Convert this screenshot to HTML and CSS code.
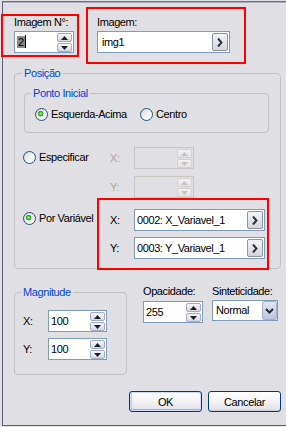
FILE: index.html
```html
<!DOCTYPE html>
<html lang="pt">
<head>
<meta charset="utf-8">
<title>Imagem</title>
<link rel="stylesheet" href="styles.css">
</head>
<body>
<div class="dialog">
  <div class="top-row">
    <div class="hl hl-num">
      <div class="lbl">Imagem N°:</div>
      <div class="spin w-num">
        <span class="val"><span class="sel">2</span><span class="caret"></span></span>
        <span class="spin-btns">
          <span class="sb"><svg width="7" height="4" viewBox="0 0 7 4"><path d="M0 4L3.5 0L7 4Z"/></svg></span>
          <span class="sb"><svg width="7" height="4" viewBox="0 0 7 4"><path d="M0 0H7L3.5 4Z"/></svg></span>
        </span>
      </div>
    </div>
    <div class="hl hl-img">
      <div class="lbl">Imagem:</div>
      <div class="field w-img">
        <span class="val pad4">img1</span>
        <span class="pick"><svg width="6" height="9" viewBox="0 0 6 9"><path d="M1 0.5L4.5 4.5L1 8.5" fill="none" stroke="#333" stroke-width="2"/></svg></span>
      </div>
    </div>
  </div>

  <fieldset class="group g-pos">
    <legend>Posição</legend>
    <fieldset class="group g-ponto">
      <legend>Ponto Inicial</legend>
      <div class="radios">
        <label class="radio checked r-first"><span class="dot"></span>Esquerda-Acima</label>
        <label class="radio"><span class="dot"></span>Centro</label>
      </div>
    </fieldset>

    <div class="opt-row esp">
      <div class="opt-left"><label class="radio"><span class="dot"></span>Especificar</label></div>
      <div class="opt-right">
        <div class="xy-row">
          <span class="xy-lbl dis-txt">X:</span>
          <div class="spin dis w-esp">
            <span class="val"></span>
            <span class="spin-btns">
              <span class="sb"><svg width="7" height="4" viewBox="0 0 7 4"><path d="M0 4L3.5 0L7 4Z"/></svg></span>
              <span class="sb"><svg width="7" height="4" viewBox="0 0 7 4"><path d="M0 0H7L3.5 4Z"/></svg></span>
            </span>
          </div>
        </div>
        <div class="xy-row">
          <span class="xy-lbl dis-txt">Y:</span>
          <div class="spin dis w-esp">
            <span class="val"></span>
            <span class="spin-btns">
              <span class="sb"><svg width="7" height="4" viewBox="0 0 7 4"><path d="M0 4L3.5 0L7 4Z"/></svg></span>
              <span class="sb"><svg width="7" height="4" viewBox="0 0 7 4"><path d="M0 0H7L3.5 4Z"/></svg></span>
            </span>
          </div>
        </div>
      </div>
    </div>

    <div class="opt-row var">
      <div class="opt-left"><label class="radio checked"><span class="dot"></span>Por Variável</label></div>
      <div class="opt-right hl hl-var">
        <div class="xy-row">
          <span class="xy-lbl">X:</span>
          <div class="field w-var">
            <span class="val">0002: X_Variavel_1</span>
            <span class="pick"><svg width="6" height="9" viewBox="0 0 6 9"><path d="M1 0.5L4.5 4.5L1 8.5" fill="none" stroke="#333" stroke-width="2"/></svg></span>
          </div>
        </div>
        <div class="xy-row">
          <span class="xy-lbl">Y:</span>
          <div class="field w-var">
            <span class="val">0003: Y_Variavel_1</span>
            <span class="pick"><svg width="6" height="9" viewBox="0 0 6 9"><path d="M1 0.5L4.5 4.5L1 8.5" fill="none" stroke="#333" stroke-width="2"/></svg></span>
          </div>
        </div>
      </div>
    </div>
  </fieldset>

  <div class="bottom-row">
    <fieldset class="group g-mag">
      <legend>Magnitude</legend>
      <div class="mag-rows">
        <div class="xy-row">
          <span class="xy-lbl">X:</span>
          <div class="spin w-mag">
            <span class="val">100</span>
            <span class="spin-btns">
              <span class="sb"><svg width="7" height="4" viewBox="0 0 7 4"><path d="M0 4L3.5 0L7 4Z"/></svg></span>
              <span class="sb"><svg width="7" height="4" viewBox="0 0 7 4"><path d="M0 0H7L3.5 4Z"/></svg></span>
            </span>
          </div>
        </div>
        <div class="xy-row">
          <span class="xy-lbl">Y:</span>
          <div class="spin w-mag">
            <span class="val">100</span>
            <span class="spin-btns">
              <span class="sb"><svg width="7" height="4" viewBox="0 0 7 4"><path d="M0 4L3.5 0L7 4Z"/></svg></span>
              <span class="sb"><svg width="7" height="4" viewBox="0 0 7 4"><path d="M0 0H7L3.5 4Z"/></svg></span>
            </span>
          </div>
        </div>
      </div>
    </fieldset>

    <div class="col-op">
      <div class="lbl">Opacidade:</div>
      <div class="spin w-op">
        <span class="val">255</span>
        <span class="spin-btns">
          <span class="sb"><svg width="7" height="4" viewBox="0 0 7 4"><path d="M0 4L3.5 0L7 4Z"/></svg></span>
          <span class="sb"><svg width="7" height="4" viewBox="0 0 7 4"><path d="M0 0H7L3.5 4Z"/></svg></span>
        </span>
      </div>
    </div>

    <div class="col-sint">
      <div class="lbl">Sinteticidade:</div>
      <div class="select">
        <span class="val pad3">Normal</span>
        <span class="dd"><svg width="9" height="6" viewBox="0 0 9 6"><path d="M1 1L4.5 4.5L8 1" fill="none" stroke="#2b2b2b" stroke-width="2"/></svg></span>
      </div>
    </div>
  </div>

  <div class="buttons">
    <button class="btn default" type="button">OK</button>
    <button class="btn" type="button">Cancelar</button>
  </div>
</div>
</body>
</html>
```

FILE: styles.css
```css
* { box-sizing: border-box; }

html, body {
  margin: 0;
  padding: 0;
}

body {
  background: #e0dfe3;
  width: 286px;
  height: 427px;
  overflow: hidden;
  font-family: "Liberation Sans", Arial, sans-serif;
  font-size: 11px;
  letter-spacing: -0.4px;
  color: #000;
}

.dialog {
  margin: 1px 0 0 2px;
  width: 284px;
  height: 425px;
  border-left: 1px solid #5e5e7c;
  border-top: 1px solid #72728e;
  border-bottom: 1px solid #5e5e7c;
  box-shadow: inset 0 1px 0 #a9a9bb;
}

.lbl {
  line-height: 13px;
  white-space: nowrap;
}

/* red highlight frames */
.hl {
  border: 2px solid #ff0000;
}

.top-row {
  display: flex;
  align-items: flex-start;
}

.hl-num {
  margin: 12px 0 0 -2px;
  width: 78px;
  padding: 0 0 2px 11px;
}

.hl-num .spin { margin-top: 2px; }

.hl-img {
  margin: 5px 0 0 7px;
  width: 160px;
  padding: 7px 0 9px 9px;
}

.hl-img .field { margin-top: 2px; }

/* inputs */
.field, .spin, .select {
  display: flex;
  height: 22px;
  border: 1px solid #7f9db9;
  background: #fff;
}

.val {
  flex: 1;
  min-width: 0;
  padding: 1px 0 0 2px;
  line-height: 19px;
  white-space: nowrap;
  overflow: hidden;
}

.pad4 { padding-left: 4px; }
.pad3 { padding-left: 3px; padding-top: 0; }

.sel {
  background: #8a8a8a;
  color: #000;
  padding: 0 1px;
}

.caret {
  display: inline-block;
  width: 1px;
  height: 13px;
  background: #000;
  vertical-align: -2px;
}

.w-num { width: 60px; }
.w-img { width: 133px; }
.w-esp { width: 60px; }
.w-var { width: 131px; }
.w-mag { width: 59px; }
.w-op { width: 60px; }

.spin-btns {
  display: flex;
  flex-direction: column;
  gap: 1px;
  padding: 1px 1px 0 0;
}

.sb {
  display: flex;
  align-items: center;
  justify-content: center;
  width: 15px;
  height: 9px;
  border: 1px solid #a3aac2;
  border-radius: 2px;
  background: linear-gradient(#f5f6fa, #d5d8e5);
}

.sb svg { fill: #1e1e1e; }

.spin.dis {
  border-color: #c9c8c0;
  background: #e0dfe3;
}

.spin.dis .sb {
  border-color: #d3d2cc;
  background: linear-gradient(#f0f0f2, #e4e4e8);
}

.spin.dis .sb svg { fill: #c4c3bc; }

.dis-txt { color: #aca899; }

.pick {
  display: flex;
  align-items: center;
  justify-content: center;
  width: 16px;
  height: 18px;
  margin: 1px 1px 0 0;
  border: 1px solid #9093a8;
  border-radius: 2px;
  background: linear-gradient(#f4f5f9, #d2d4e0);
}

/* group boxes */
fieldset.group {
  margin: 0;
  min-width: 0;
  border: 1px solid #c2c2c6;
  border-radius: 4px;
}

fieldset.group legend {
  color: #0046d5;
  padding: 0 2px;
  line-height: 13px;
  white-space: nowrap;
}

.g-pos {
  margin: 3px 0 0 11px !important;
  width: 267px;
  padding: 7px 11px 0 9px;
}

.g-pos > legend { margin-left: -2px; }

.g-ponto {
  width: 245px;
  padding: 8px 0 11px 10px;
}

.g-ponto > legend { margin-left: -4px; }

.radios { display: flex; }

.radio {
  display: inline-flex;
  align-items: center;
  gap: 3px;
  line-height: 13px;
  white-space: nowrap;
}

.r-first { width: 105px; }

.dot {
  width: 13px;
  height: 13px;
  flex: none;
  border-radius: 50%;
  border: 1px solid #1c5180;
  background: linear-gradient(135deg, #d8d6cf 0%, #f4f4f2 55%, #ffffff 100%);
}

.checked .dot {
  background:
    radial-gradient(circle at 42% 42%, #b9f2b0 0, #4cc244 1.5px, #21a121 2.6px, rgba(33,161,33,0) 3.1px),
    linear-gradient(135deg, #d8d6cf 0%, #f4f4f2 55%, #ffffff 100%);
}

.opt-row {
  display: flex;
  align-items: flex-start;
}

.opt-left {
  width: 73px;
  flex: none;
}

.opt-left .radio { margin-left: -1px; }

.esp { margin-top: 14px; }
.esp .opt-left { padding-top: 4px; }

.esp .opt-right {
  padding-left: 13px;
  display: flex;
  flex-direction: column;
  gap: 7px;
}

.var { margin-bottom: -2px; }
.var .opt-left { padding-top: 14px; }

.hl-var {
  width: 179px;
  padding: 9px 0 9px 11px;
  display: flex;
  flex-direction: column;
  gap: 6px;
}

.xy-row {
  display: flex;
  align-items: center;
  height: 22px;
}

.xy-lbl {
  width: 24px;
  flex: none;
  line-height: 13px;
}

/* bottom area */
.bottom-row {
  display: flex;
  align-items: flex-start;
  margin-top: 17px;
  padding-left: 11px;
}

.g-mag {
  width: 113px;
  padding: 11px 0 14px 8px;
}

.g-mag > legend { margin-left: -2px; }

.mag-rows {
  display: flex;
  flex-direction: column;
  gap: 6px;
}

.g-mag .xy-lbl { width: 25px; }

.col-op {
  margin: -1px 0 0 16px;
}

.col-op .spin { margin-top: 3px; }

.col-sint {
  margin: -1px 0 0 9px;
}

.select {
  width: 66px;
  height: 21px;
  margin-top: 2px;
}

.dd {
  display: flex;
  align-items: center;
  justify-content: center;
  width: 15px;
  height: 19px;
  border: 1px solid #a6b0cc;
  border-radius: 2px;
  background: linear-gradient(#e2e7f4, #bcc5df);
}

/* dialog buttons */
.buttons {
  display: flex;
  justify-content: flex-end;
  gap: 6px;
  margin-top: 16px;
  padding-right: 5px;
}

.btn {
  width: 73px;
  height: 21px;
  padding: 0;
  font: inherit;
  letter-spacing: inherit;
  color: #000;
  border: 1px solid #003c74;
  border-radius: 3px;
  background: linear-gradient(#ffffff, #f4f4f6 45%, #e6e6ec 85%, #d6d6e0);
  box-shadow: inset 0 -1px 0 #d0d0da;
}

.btn.default {
  box-shadow: inset 0 0 0 1px #cddcf8, inset 0 -2px 0 0 #98b0e8, inset 1px 0 0 1px #b8cbf3;
}
```
